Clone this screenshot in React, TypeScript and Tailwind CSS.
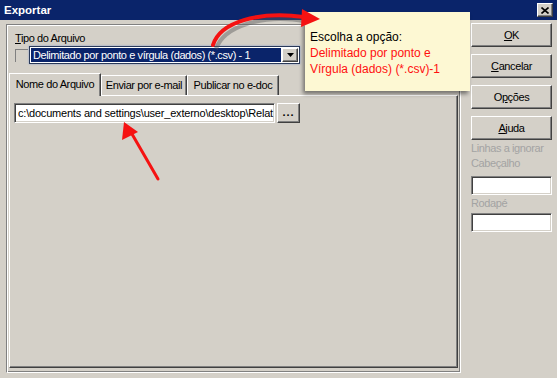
import React from "react";

const raised =
  "bg-[#d4d0c8] border border-t-white border-l-white border-r-[#404040] border-b-[#404040] shadow-[inset_-1px_-1px_0_#808080]";
const sunken =
  "bg-white border border-t-[#808080] border-l-[#808080] border-r-white border-b-white shadow-[inset_1px_1px_0_#404040,inset_-1px_-1px_0_#d4d0c8]";

function Btn({ children }: { children: React.ReactNode }) {
  return (
    <div className={`${raised} h-[24px] flex items-center justify-center text-black`}>
      {children}
    </div>
  );
}

function Tab({ label, width, active }: { label: string; width: string; active?: boolean }) {
  return (
    <div
      className={`${width} flex items-center justify-center border-t border-l border-t-white border-l-white border-r border-r-[#404040] shadow-[inset_-1px_0_0_#808080] bg-[#d4d0c8] ${
        active ? "h-[23px] relative z-10 -mb-px pb-[2px]" : "h-[20px]"
      }`}
    >
      {label}
    </div>
  );
}

export default function App() {
  return (
    <div className="relative w-[557px] h-[378px] overflow-hidden bg-[#d4d0c8] text-[11px] leading-[13px] tracking-[-0.4px] text-black font-['Liberation_Sans',Arial,sans-serif]">
      {/* title bar */}
      <div className="h-[20px] bg-[#0a246a] flex items-center justify-between pl-[4px] pr-[4px]">
        <span className="text-white font-bold text-[11.5px] tracking-normal">Exportar</span>
        <div className={`${raised} w-[16px] h-[14px] flex items-center justify-center`}>
          <svg width="8" height="7" viewBox="0 0 8 7">
            <path d="M0.5 0.5 L7.5 6.5 M7.5 0.5 L0.5 6.5" stroke="#000" strokeWidth="1.6" />
          </svg>
        </div>
      </div>

      <div className="flex">
        {/* left group */}
        <div className="ml-[6px] mt-[4px] w-[455px] h-[349px] border border-t-[#808080] border-l-[#808080] border-r-white border-b-white shadow-[inset_1px_1px_0_#fff,inset_-1px_-1px_0_#808080] flex flex-col">
          <div className="mt-[7px] ml-[8px] h-[13px]">
            <span className="underline">T</span>ipo do Arquivo
          </div>
          <div className="mt-[1px] ml-[8px] h-[18px] flex items-center">
            <div className="w-[13px] h-[13px] border-t border-l border-[#808080] shrink-0" />
            <div className="ml-[1px] w-[271px] h-[18px] border border-[#2a3a5a] bg-white flex items-center p-[1px] shadow-[0_0_2px_#8aa0d0]">
              <div className="flex-1 h-[14px] bg-[#0a246a] text-white flex items-center pl-[2px] whitespace-nowrap overflow-hidden">
                Delimitado por ponto e vírgula (dados) (*.csv) - 1
              </div>
              <div className={`${raised} ml-[1px] w-[16px] h-[14px] flex items-center justify-center`}>
                <svg width="7" height="4" viewBox="0 0 7 4">
                  <path d="M0 0 H7 L3.5 4 Z" fill="#000" />
                </svg>
              </div>
            </div>
          </div>

          {/* tabs */}
          <div className="mt-[9px] ml-[2px] h-[22px] flex items-end">
            <Tab label="Nome do Arquivo" width="w-[92px]" active />
            <Tab label="Enviar por e-mail" width="w-[86px]" />
            <Tab label="Publicar no e-doc" width="w-[92px]" />
          </div>
          <div className="ml-[2px] mr-[2px] h-[273px] border border-t-white border-l-white border-r-[#404040] border-b-[#404040] shadow-[inset_-1px_-1px_0_#808080]">
            <div className="mt-[7px] ml-[4px] flex">
              <div className={`${sunken} w-[261px] h-[20px] flex items-center pl-[3px] whitespace-nowrap overflow-hidden tracking-[-0.2px]`}>
                c:\documents and settings\user_externo\desktop\Relat
              </div>
              <div className={`${raised} ml-[2px] w-[23px] h-[20px] flex items-end justify-center pb-[4px] font-bold tracking-[1px] leading-none`}>
                ...
              </div>
            </div>
          </div>
        </div>

        {/* right column */}
        <div className="ml-[10px] mt-[3px] w-[81px] flex flex-col">
          <div className="flex flex-col gap-[7px]">
            <Btn>
              <span className="underline">O</span>K
            </Btn>
            <Btn>
              <span className="underline">C</span>ancelar
            </Btn>
            <Btn>
              O<span className="underline">p</span>ções
            </Btn>
            <Btn>
              <span className="underline">A</span>juda
            </Btn>
          </div>
          <div className="mt-[1px] text-[#a3a3a3] leading-[15px] whitespace-nowrap overflow-hidden">
            <div>Linhas a ignorar</div>
            <div>Cabeçalho</div>
          </div>
          <div className={`${sunken} mt-[5px] h-[19px]`} />
          <div className="text-[#a3a3a3] leading-[15px] mt-[1px]">Rodapé</div>
          <div className={`${sunken} mt-[2px] h-[19px]`} />
        </div>
      </div>

      {/* tooltip callout */}
      <div className="absolute left-[305px] top-[12px] w-[165px] h-[79px] bg-[#fdf8d3] shadow-[-2px_3px_4px_rgba(0,0,0,0.45)] pt-[17px] pl-[5px] text-[12px] leading-[16px] tracking-normal">
        <div className="text-black">Escolha a opção:</div>
        <div className="text-[#ff1010]">Delimitado por ponto e</div>
        <div className="text-[#ff1010]">Vírgula (dados) (*.csv)-1</div>
      </div>

      {/* arrows */}
      <svg className="absolute left-0 top-0 pointer-events-none" width="557" height="378" viewBox="0 0 557 378">
        <path d="M216 49 C224 26 262 14 305 21" stroke="rgba(90,90,90,0.45)" strokeWidth="4" fill="none" />
        <path d="M213 45 C220 22 258 11 304 17" stroke="#f51212" strokeWidth="4" fill="none" strokeLinecap="round" />
        <path d="M320 19 L302 9 L301 27 Z" fill="#f51212" />
        <path d="M158 179 L132 134" stroke="#f51212" strokeWidth="3" strokeLinecap="round" />
        <path d="M124 122 L122 140 L138 132 Z" fill="#f51212" />
      </svg>
    </div>
  );
}
